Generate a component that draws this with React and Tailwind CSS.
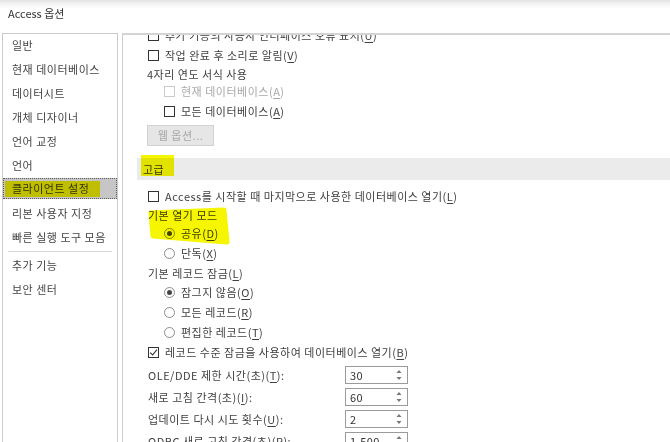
import React from "react";

const FONT = { fontFamily: "'Noto Sans CJK KR', 'Noto Sans', sans-serif" };

function Cb({ checked, disabled }) {
  return (
    <span
      className={
        disabled
          ? "w-[11px] h-[11px] border border-[#cacaca] bg-white flex items-center justify-center shrink-0"
          : "w-[11px] h-[11px] border border-[#333333] bg-white flex items-center justify-center shrink-0"
      }
    >
      {checked && (
        <svg width="9" height="9" viewBox="0 0 9 9">
          <path d="M1.2 4.6 L3.6 7 L7.9 1.6" fill="none" stroke="#333" strokeWidth="1.1" />
        </svg>
      )}
    </span>
  );
}

function Radio({ checked }) {
  return (
    <span className="w-[11px] h-[11px] rounded-full border border-[#8c8c8c] bg-white flex items-center justify-center shrink-0">
      {checked && <span className="w-[5px] h-[5px] rounded-full bg-[#444444]" />}
    </span>
  );
}

function M({ k }) {
  return (
    <>
      (<span className="underline underline-offset-2">{k}</span>)
    </>
  );
}

function Spin({ value }) {
  return (
    <div className="w-[63px] h-[18px] border border-[#9a9a9a] bg-white flex items-center justify-between pl-[4px] pr-[5px]">
      <span className="text-[#333333]">{value}</span>
      <svg width="6" height="12" viewBox="0 0 6 12">
        <path d="M0.5 4 L3 1 L5.5 4 Z" fill="#777" />
        <path d="M0.5 8 L3 11 L5.5 8 Z" fill="#777" />
      </svg>
    </div>
  );
}

const navTop = ["일반", "현재 데이터베이스", "데이터시트", "개체 디자이너", "언어 교정", "언어"];
const navMid = ["리본 사용자 지정", "빠른 실행 도구 모음"];
const navBot = ["추가 기능", "보안 센터"];

function NavItem({ label }) {
  return <div className="h-[24px] flex items-center pl-[9px] text-[#444444] tracking-[0.5px]">{label}</div>;
}

export default function App() {
  return (
    <div className="relative w-[670px] h-[442px] overflow-hidden bg-white text-[11px] leading-none" style={FONT}>
      {/* title bar */}
      <div className="h-[33px] bg-[linear-gradient(to_bottom,#e2e2e2_0px,#f4f4f4_4px,#ffffff_9px)]">
        <div className="h-[25px] flex items-center pl-[8px] pt-[1px] text-[#333333] text-[11px]">Access 옵션</div>
      </div>

      <div className="flex h-[409px] pl-[2px]">
        {/* left nav */}
        <div className="w-[116px] border border-b-0 border-[#cbcbcb] flex flex-col">
          <div className="-mt-[1px]">
            {navTop.map((n) => (
              <NavItem key={n} label={n} />
            ))}
            <div className="h-[24px] pt-[1px]">
              <div className="h-[21px] bg-[#c6c6c6] border border-dotted border-[#5c5c5c] flex items-center pl-[8px] text-[#333333] tracking-[0.5px]">
                클라이언트 설정
              </div>
            </div>
            {navMid.map((n) => (
              <NavItem key={n} label={n} />
            ))}
            <div className="h-[4px] flex items-center px-[5px]">
              <div className="h-px w-full bg-[#d8d8d8]" />
            </div>
            {navBot.map((n) => (
              <NavItem key={n} label={n} />
            ))}
          </div>
        </div>

        {/* right panel */}
        <div className="ml-[4px] flex-1 overflow-hidden border-l border-[#cbcbcb] border-t-2 border-t-[#d4d4d4]">
          <div className="-mt-[10px] pl-[25px] text-[#404040] tracking-[0.5px]">
            <div className="h-[20px] flex items-center gap-[6px]">
              <Cb />
              <span>추가 기능의 사용자 인터페이스 오류 표시<M k="U" /></span>
            </div>
            <div className="h-[20px] flex items-center gap-[6px]">
              <Cb />
              <span>작업 완료 후 소리로 알림<M k="V" /></span>
            </div>
            <div className="h-[18px] flex items-center -ml-[1px]">4자리 연도 서식 사용</div>
            <div className="h-[17px] flex items-center gap-[6px] pl-[16px]">
              <Cb disabled />
              <span className="text-[#a8a8a8]">현재 데이터베이스<M k="A" /></span>
            </div>
            <div className="h-[22px] flex items-center gap-[6px] pl-[16px]">
              <Cb />
              <span>모든 데이터베이스<M k="A" /></span>
            </div>
            <div className="mt-[3px] -ml-[1px] w-[67px] h-[21px] bg-[#e6e6e6] border border-[#d2d2d2] flex items-center justify-center text-[#a6a6a6]">
              웹 옵션...
            </div>

            {/* section header */}
            <div className="mt-[12px] -ml-[11px] h-[22px] bg-[#ebebeb] flex items-center pl-[6px] text-[#333333]">고급</div>

            <div className="mt-[6px] h-[20px] flex items-center gap-[6px]">
              <Cb />
              <span>Access를 시작할 때 마지막으로 사용한 데이터베이스 열기<M k="L" /></span>
            </div>
            <div className="h-[18px] flex items-center">기본 열기 모드</div>
            <div className="h-[18px] flex items-center gap-[6px] pl-[16px]">
              <Radio checked />
              <span>공유<M k="D" /></span>
            </div>
            <div className="h-[22px] flex items-center gap-[6px] pl-[16px]">
              <Radio />
              <span>단독<M k="X" /></span>
            </div>
            <div className="h-[18px] flex items-center">기본 레코드 잠금<M k="L" /></div>
            <div className="h-[20px] flex items-center gap-[6px] pl-[16px]">
              <Radio checked />
              <span>잠그지 않음<M k="O" /></span>
            </div>
            <div className="h-[20px] flex items-center gap-[6px] pl-[16px]">
              <Radio />
              <span>모든 레코드<M k="R" /></span>
            </div>
            <div className="h-[20px] flex items-center gap-[6px] pl-[16px]">
              <Radio />
              <span>편집한 레코드<M k="T" /></span>
            </div>
            <div className="h-[20px] flex items-center gap-[6px]">
              <Cb checked />
              <span>레코드 수준 잠금을 사용하여 데이터베이스 열기<M k="B" /></span>
            </div>

            <div className="mt-[2px] grid grid-cols-[197px_63px] auto-rows-[22px] items-center">
              <span>OLE/DDE 제한 시간(초)<M k="T" />:</span>
              <Spin value="30" />
              <span>새로 고침 간격(초)<M k="I" />:</span>
              <Spin value="60" />
              <span>업데이트 다시 시도 횟수<M k="U" />:</span>
              <Spin value="2" />
              <span>ODBC 새로 고침 간격(초)<M k="R" />:</span>
              <Spin value="1,500" />
            </div>
          </div>
        </div>
      </div>

      {/* highlighter marks */}
      <div className="absolute left-[5px] top-[181px] w-[95px] h-[16px] bg-[#f6f600] mix-blend-multiply" />
      <div className="absolute left-[141px] top-[155px] w-[33px] h-[21px] bg-[#f6f600] mix-blend-multiply" />
      <svg className="absolute left-0 top-0 mix-blend-multiply pointer-events-none" width="670" height="442">
        <path
          d="M151 213 L224 210 L227 242 L153 236 Z"
          fill="#f6f600"
          stroke="#f6f600"
          strokeWidth="5"
          strokeLinejoin="round"
        />
      </svg>
    </div>
  );
}
